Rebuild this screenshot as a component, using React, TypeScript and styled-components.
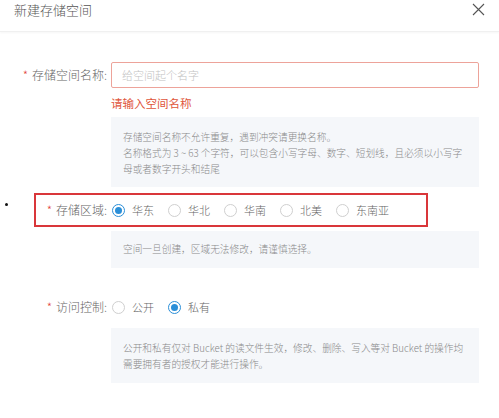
import React from "react";
import styled, { createGlobalStyle } from "styled-components";

const Global = createGlobalStyle`
  html, body { margin: 0; padding: 0; background: #fff; }
  body { font-family: "Noto Sans CJK SC", "Noto Sans", sans-serif; color: #555; }
`;

const Page = styled.div`
  width: 499px;
  height: 418px;
  position: relative;
  overflow: hidden;
  background: #fff;
`;

const Header = styled.div`
  height: 32px;
  display: flex;
  align-items: center;
  justify-content: space-between;
  padding: 0 14px 0 14px;
  border-bottom: 1px solid #f0f0f0;
  box-shadow: 0 1px 2px rgba(0, 0, 0, 0.04);
  box-sizing: border-box;
`;

const Title = styled.div`
  font-size: 13px;
  font-weight: 300;
  color: #555;
  line-height: 20px;
  margin-top: -11px;
`;

const Close = styled.button`
  border: 0;
  background: none;
  padding: 0;
  width: 14px;
  height: 14px;
  margin-top: -12px;
  display: flex;
  align-items: center;
  justify-content: center;
`;

const Form = styled.div`
  display: flex;
  flex-direction: column;
`;

const Row = styled.div<{ $top: number; $h: number }>`
  position: relative;
  display: grid;
  grid-template-columns: 107px 368px;
  column-gap: 4px;
  align-items: center;
  margin-top: ${(p) => p.$top}px;
  min-height: ${(p) => p.$h}px;
`;

const Label = styled.div`
  font-size: 12px;
  font-weight: 300;
  color: #666;
  text-align: right;
  white-space: nowrap;
  line-height: 16px;
`;

const Star = styled.span`
  color: #e2453c;
  margin-right: 4px;
`;

const Input = styled.input`
  box-sizing: border-box;
  width: 368px;
  height: 26px;
  border: 1px solid #eda39a;
  border-radius: 2px;
  padding: 0 10px;
  font-family: inherit;
  font-size: 11px;
  font-weight: 300;
  color: #555;
  outline: none;
  &::placeholder { color: #c2c2c2; }
`;

const Indented = styled.div<{ $top: number }>`
  margin-left: 111px;
  width: 368px;
  margin-top: ${(p) => p.$top}px;
`;

const ErrorText = styled.div`
  font-size: 11.5px;
  line-height: 16px;
  color: #e0553b;
`;

const Hint = styled.div<{ $pt: number; $pb: number }>`
  box-sizing: border-box;
  background: #f5f7fa;
  padding: ${(p) => p.$pt}px 8px ${(p) => p.$pb}px 12px;
  font-size: 9.7px;
  font-weight: 300;
  line-height: 16px;
  color: #8a8a8a;
`;

const Radios = styled.div`
  display: flex;
  align-items: center;
  padding-left: 1px;
`;

const RadioItem = styled.label`
  display: flex;
  align-items: center;
  margin-right: 14px;
  font-size: 11px;
  font-weight: 300;
  color: #666;
  line-height: 16px;
`;

const Circle = styled.span<{ $on?: boolean }>`
  box-sizing: border-box;
  width: 13px;
  height: 13px;
  border-radius: 50%;
  border: 1px solid ${(p) => (p.$on ? "#2b8fd8" : "#cfcfcf")};
  margin-right: 7px;
  display: flex;
  align-items: center;
  justify-content: center;
  background: #fff;
  &::after {
    content: "";
    width: 7px;
    height: 7px;
    border-radius: 50%;
    background: ${(p) => (p.$on ? "#2b8fd8" : "transparent")};
  }
`;

const Annotation = styled.div`
  position: absolute;
  left: 34px;
  top: 0;
  width: 394px;
  height: 34px;
  box-sizing: border-box;
  border: 2px solid #d9363a;
  pointer-events: none;
`;

const Bullet = styled.div`
  position: absolute;
  left: 5px;
  top: 10px;
  width: 3px;
  height: 3px;
  border-radius: 50%;
  background: #111;
`;

function Radio({ label, on }: { label: string; on?: boolean }) {
  return (
    <RadioItem>
      <Circle $on={on} />
      {label}
    </RadioItem>
  );
}

export default function App() {
  return (
    <Page>
      <Global />
      <Header>
        <Title>新建存储空间</Title>
        <Close aria-label="关闭">
          <svg width="13" height="13" viewBox="0 0 13 13">
            <path d="M1 1 L12 12 M12 1 L1 12" stroke="#555" strokeWidth="1.1" fill="none" />
          </svg>
        </Close>
      </Header>
      <Form>
        <Row $top={30} $h={26}>
          <Label>
            <Star>*</Star>存储空间名称:
          </Label>
          <Input placeholder="给空间起个名字" />
        </Row>
        <Indented $top={7}>
          <ErrorText>请输入空间名称</ErrorText>
        </Indented>
        <Indented $top={6}>
          <Hint $pt={12} $pb={10}>
            存储空间名称不允许重复，遇到冲突请更换名称。
            <br />
            名称格式为 3 ~ 63 个字符，可以包含小写字母、数字、短划线，且必须以小写字
            <br />
            母或者数字开头和结尾
          </Hint>
        </Indented>
        <Row $top={6} $h={34}>
          <Bullet />
          <Annotation />
          <Label>
            <Star>*</Star>存储区域:
          </Label>
          <Radios>
            <Radio label="华东" on />
            <Radio label="华北" />
            <Radio label="华南" />
            <Radio label="北美" />
            <Radio label="东南亚" />
          </Radios>
        </Row>
        <Indented $top={4}>
          <Hint $pt={10} $pb={11}>
            空间一旦创建，区域无法修改，请谨慎选择。
          </Hint>
        </Indented>
        <Row $top={27} $h={24}>
          <Label>
            <Star>*</Star>访问控制:
          </Label>
          <Radios>
            <Radio label="公开" />
            <Radio label="私有" on />
          </Radios>
        </Row>
        <Indented $top={9}>
          <Hint $pt={12} $pb={11}>
            公开和私有仅对 Bucket 的读文件生效，修改、删除、写入等对 Bucket 的操作均
            <br />
            需要拥有者的授权才能进行操作。
          </Hint>
        </Indented>
      </Form>
    </Page>
  );
}
